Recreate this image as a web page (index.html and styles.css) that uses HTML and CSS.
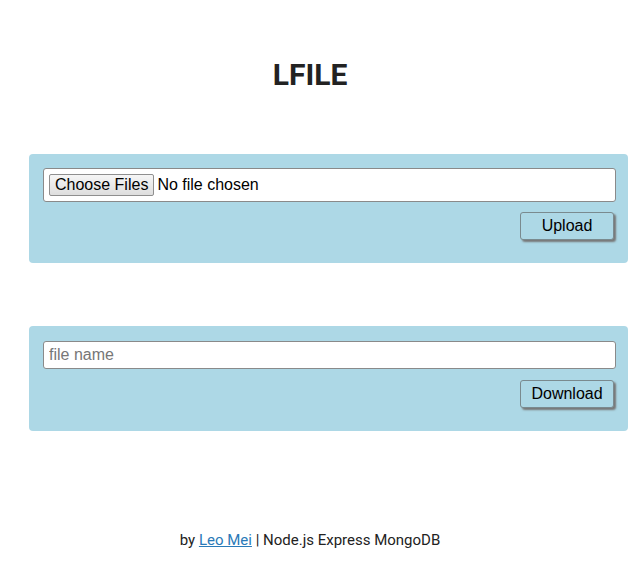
FILE: index.html
```html
<!DOCTYPE html>
<html lang="en">
<head>
<meta charset="utf-8">
<title>LFILE</title>
<link rel="stylesheet" href="styles.css">
</head>
<body>
<main class="page">
  <h1 class="title">LFILE</h1>
  <form class="panel panel-upload">
    <input class="file-input" type="file" multiple>
    <div class="actions"><button type="button" class="btn">Upload</button></div>
  </form>
  <form class="panel panel-download">
    <input class="text-input" type="text" placeholder="file name">
    <div class="actions"><button type="button" class="btn">Download</button></div>
  </form>
  <footer class="footer">by <a href="#">Leo Mei</a> | Node.js Express MongoDB</footer>
</main>
</body>
</html>
```

FILE: styles.css
```css
html, body {
  margin: 0;
  padding: 0;
  background: #fff;
}
.page {
  width: 620px;
  display: flex;
  flex-direction: column;
  font-family: Roboto, "Liberation Sans", sans-serif;
}
.title {
  margin: 57px 0 0 0;
  font-size: 30px;
  line-height: 36px;
  font-weight: 700;
  color: #222;
  text-align: center;
}
.panel {
  margin: 0 0 0 29px;
  width: 599px;
  box-sizing: border-box;
  background: #add8e6;
  border-radius: 4px;
  display: flex;
  flex-direction: column;
  gap: 10px;
  padding: 14px 12px 23px 14px;
}
.panel-upload {
  margin-top: 61px;
}
.panel-download {
  margin-top: 63px;
  padding-top: 15px;
  gap: 11px;
}
.file-input {
  box-sizing: border-box;
  width: 573px;
  height: 34px;
  margin: 0;
  padding: 5px;
  border: 1px solid #8a8a8a;
  border-radius: 3px;
  background: #fff;
  font-family: Arial, "Liberation Sans", sans-serif;
  font-size: 16px;
  color: #000;
}
.file-input::file-selector-button {
  height: 22px;
  margin: 0 3px 0 0;
  padding: 0 5px;
  border: 1px solid #8f8f8f;
  border-radius: 2px;
  background: linear-gradient(#f6f6f6, #dedede);
  font-family: Arial, "Liberation Sans", sans-serif;
  font-size: 16px;
  color: #000;
}
.text-input {
  box-sizing: border-box;
  width: 573px;
  height: 28px;
  margin: 0;
  padding: 0 5px;
  border: 1px solid #8a8a8a;
  border-radius: 3px;
  background: #fff;
  font-family: Arial, "Liberation Sans", sans-serif;
  font-size: 16px;
  color: #000;
  outline: none;
}
.text-input::placeholder {
  color: #777;
}
.actions {
  display: flex;
  justify-content: flex-end;
  padding-right: 2px;
}
.btn {
  box-sizing: border-box;
  width: 94px;
  height: 28px;
  margin: 0;
  padding: 0;
  border: 1px solid #7a8a8f;
  border-radius: 3px;
  background: #add8e6;
  box-shadow: 2px 2px 2px #777;
  font-family: Arial, "Liberation Sans", sans-serif;
  font-size: 16px;
  color: #000;
}
.footer {
  margin-top: 98px;
  font-size: 15px;
  line-height: 22px;
  color: #222;
  text-align: center;
}
.footer a {
  color: #2a7ab8;
  text-decoration: underline;
}
```
